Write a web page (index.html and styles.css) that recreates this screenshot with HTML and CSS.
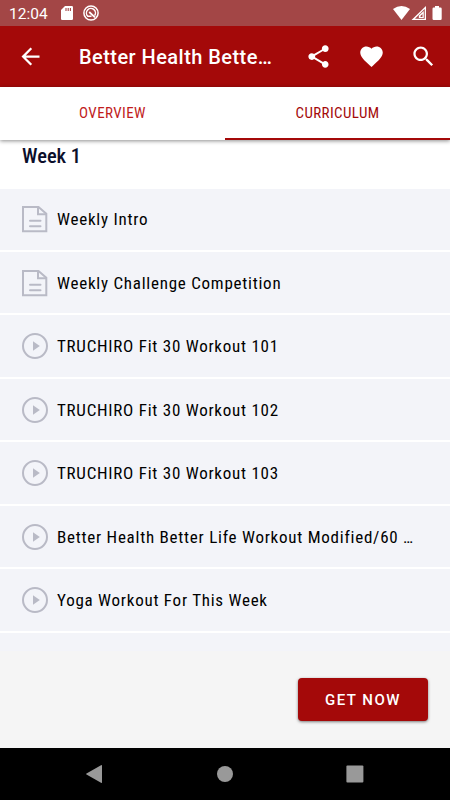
FILE: index.html
```html
<!DOCTYPE html>
<html lang="en">
<head>
<meta charset="utf-8">
<title>Curriculum</title>
<link rel="stylesheet" href="styles.css">
</head>
<body>
<svg class="defs" width="0" height="0">
  <symbol id="doc" viewBox="0 0 26 28"><g fill="none" stroke="#b9bac6" stroke-width="2"><path d="M1 2H16.5L24.3 8.8V26.3H1z"/><path d="M16 2V9.3H24"/><path d="M8 15.8H18.5M8 21.2H18.5" stroke-linecap="round"/></g></symbol>
  <symbol id="play" viewBox="0 0 26 28"><circle cx="13" cy="14" r="12" fill="none" stroke="#b9bac6" stroke-width="2"/><path d="M11 9.2L17.8 14L11 18.8z" fill="#b9bac6"/></symbol>
</svg>
<div class="screen">
  <div class="status">
    <span class="time">12:04</span>
    <svg class="sd" width="12" height="14" viewBox="0 0 12 14"><path fill="#fff" d="M4 0H10.8Q12 0 12 1.2V12.8Q12 14 10.8 14H1.2Q0 14 0 12.8V4z"/><path stroke="#a34646" stroke-width="1.1" d="M5 2V5M7.2 2V5M9.4 2V5"/></svg>
    <svg class="ring" width="16" height="16" viewBox="0 0 16 16"><g fill="none" stroke="#fff"><circle cx="8" cy="8" r="7.1" stroke-width="1.5"/><path d="M11.6 10.6A4.5 4.5 0 1 0 4.8 11.2H8.5" stroke-width="1.5"/><path d="M6.2 7L12 12.4" stroke-width="1.8"/></g></svg>
    <span class="grow"></span>
    <svg width="50" height="16" viewBox="0 0 50 16"><path fill="#fff" d="M0 4Q8.5-2 17 4L8.5 15z"/><path fill="#fff" fill-rule="evenodd" d="M33 1V15H18.5zM31.7 4L22 13.7H31.7z"/><path fill="#fff" fill-rule="evenodd" d="M30.8 6V13H25.8V10.5zM29.5 9L27.5 11V12H29.5z"/><path fill="#fff" d="M42 1H46V2.5H47.4Q48.7 2.5 48.7 3.7V13.8Q48.7 15 47.4 15H40.7Q39.5 15 39.5 13.8V3.7Q39.5 2.5 40.7 2.5H42z"/></svg>
  </div>
  <div class="appbar">
    <svg class="back" width="27" height="27" viewBox="0 0 24 24"><path fill="#fff" d="M20 11H7.83l5.59-5.59L12 4l-8 8 8 8 1.41-1.41L7.83 13H20v-2z"/></svg>
    <span class="title">Better Health Bette…</span>
    <span class="grow"></span>
    <svg width="27" height="27" viewBox="0 0 24 24"><path fill="#fff" d="M18 16.08c-.76 0-1.44.3-1.96.77L8.91 12.7c.05-.23.09-.46.09-.7s-.04-.47-.09-.7l7.05-4.11c.54.5 1.25.81 2.04.81 1.66 0 3-1.34 3-3s-1.34-3-3-3-3 1.34-3 3c0 .24.04.47.09.7L8.04 9.81C7.5 9.31 6.79 9 6 9c-1.66 0-3 1.34-3 3s1.34 3 3 3c.79 0 1.5-.31 2.04-.81l7.12 4.16c-.05.21-.08.43-.08.65 0 1.61 1.31 2.92 2.92 2.92s2.92-1.31 2.92-2.92-1.31-2.92-2.92-2.92z"/></svg>
    <svg width="27" height="27" viewBox="0 0 24 24"><path fill="#fff" d="M12 21.35l-1.45-1.32C5.4 15.36 2 12.28 2 8.5 2 5.42 4.42 3 7.5 3c1.74 0 3.41.81 4.5 2.09C13.09 3.81 14.76 3 16.5 3 19.58 3 22 5.42 22 8.5c0 3.78-3.4 6.86-8.55 11.54L12 21.35z"/></svg>
    <svg width="27" height="27" viewBox="0 0 24 24"><path fill="#fff" d="M15.5 14h-.79l-.28-.27C15.41 12.59 16 11.11 16 9.5 16 5.91 13.09 3 9.5 3S3 5.91 3 9.5 5.91 16 9.5 16c1.61 0 3.09-.59 4.23-1.57l.27.28v.79l5 4.99L20.49 19l-4.99-5zm-6 0C7.01 14 5 11.99 5 9.5S7.01 5 9.5 5 14 7.01 14 9.5 11.99 14 9.5 14z"/></svg>
  </div>
  <div class="tabs">
    <div class="tab">OVERVIEW</div>
    <div class="tab active">CURRICULUM</div>
  </div>
  <div class="list">
    <h2>Week 1</h2>
    <div class="row"><svg><use href="#doc"/></svg><span>Weekly Intro</span></div>
    <div class="row"><svg><use href="#doc"/></svg><span>Weekly Challenge Competition</span></div>
    <div class="row"><svg><use href="#play"/></svg><span>TRUCHIRO Fit 30 Workout 101</span></div>
    <div class="row"><svg><use href="#play"/></svg><span>TRUCHIRO Fit 30 Workout 102</span></div>
    <div class="row"><svg><use href="#play"/></svg><span>TRUCHIRO Fit 30 Workout 103</span></div>
    <div class="row"><svg><use href="#play"/></svg><span>Better Health Better Life Workout Modified/60 …</span></div>
    <div class="row"><svg><use href="#play"/></svg><span>Yoga Workout For This Week</span></div>
    <div class="row"></div>
  </div>
  <div class="footer"><button class="cta">GET NOW</button></div>
  <div class="nav">
    <svg width="18" height="20" viewBox="0 0 18 20"><path fill="#999" d="M15 1.2Q16 .6 16 1.7V18.3Q16 19.4 15 18.8L.5 10.5Q-.3 10 .5 9.5z"/></svg>
    <svg width="18" height="20" viewBox="0 0 18 20"><circle cx="9" cy="10" r="8" fill="#999"/></svg>
    <svg width="18" height="20" viewBox="0 0 18 20"><rect x=".4" y="1.4" width="17" height="17" rx="1" fill="#999"/></svg>
  </div>
</div>
</body>
</html>
```
FILE: styles.css
```css
* { box-sizing: border-box; }
body { margin: 0; font-family: Roboto, "Liberation Sans", sans-serif; }
.defs { display: block; }
.screen { width: 450px; height: 800px; display: flex; flex-direction: column; overflow: hidden; background: #fff; }
.grow { flex: 1; }
.status { height: 26px; flex: none; background: #a34646; color: #fff; display: flex; align-items: center; padding: 0 0 0 9px; }
.status svg { flex: none; }
.time { font-size: 15.5px; width: 52px; padding-top: 1px; }
.ring { margin-left: 10px; }
.status > svg:last-child { margin-right: 7px; }
.appbar { height: 61px; flex: none; background: #a40909; color: #fff; display: flex; align-items: center; padding: 0 13px 0 17px; }
.appbar svg { margin-left: 25.5px; }
.appbar .back { margin: 0 35px 0 0; }
.title { font-size: 20px; font-weight: 500; letter-spacing: .45px; white-space: nowrap; padding-top: 1px; }
.tabs { height: 53px; flex: none; display: flex; background: #fff; box-shadow: 0 1px 4px rgba(0,0,0,.45); position: relative; z-index: 1; }
.tab { flex: 1; display: flex; align-items: center; justify-content: center; color: #c11c1c; font-family: "Roboto Condensed", Roboto, sans-serif; font-stretch: 75%; font-size: 15px; font-weight: 400; letter-spacing: .4px; border-bottom: 2px solid transparent; }
.active { color: #a40909; border-color: #a40909; }
.list { flex: 1; min-height: 0; overflow: hidden; font-family: "Roboto Condensed", Roboto, sans-serif; font-stretch: 75%; }
h2 { margin: 0; height: 48.6px; padding: 3px 22px 0; font-size: 20.5px; line-height: 26px; font-weight: 500; color: #0b0f2b; }
.row { height: 61.45px; margin-bottom: 2px; background: #f3f4f9; display: flex; align-items: center; padding-left: 22px; font-size: 17px; font-weight: 400; color: #000; letter-spacing: .75px; white-space: nowrap; }
.row svg { width: 26px; height: 28px; margin-right: 9px; }
.footer { height: 96.5px; flex: none; background: #f5f5f5; display: flex; justify-content: flex-end; align-items: flex-start; padding: 27px 22px 0 0; }
.cta { width: 130px; height: 43px; border: 0; border-radius: 4px; background: #a40909; color: #fff; font: 500 15px Roboto, sans-serif; letter-spacing: 1.5px; box-shadow: 0 1px 3px rgba(0,0,0,.5); }
.nav { height: 52.5px; flex: none; background: #000; display: flex; justify-content: center; gap: 112px; align-items: center; }
```
